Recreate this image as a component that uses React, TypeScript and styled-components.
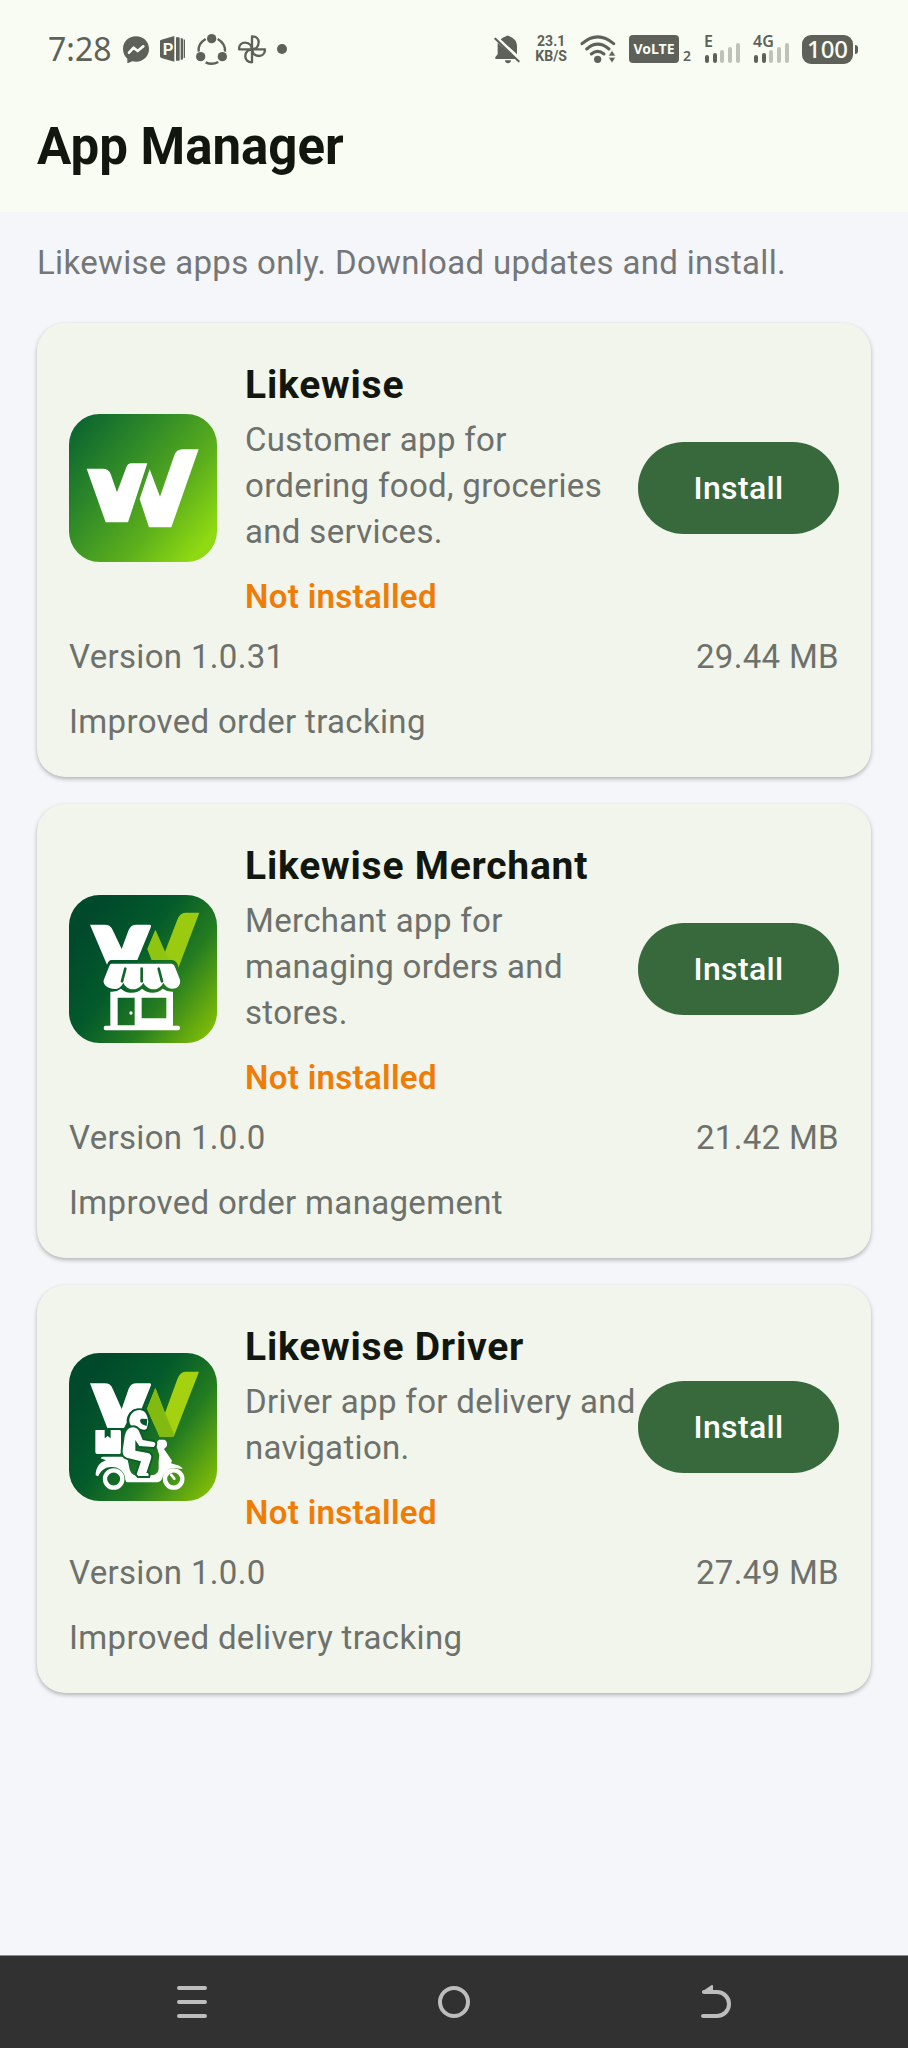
import React from "react";
import styled, { createGlobalStyle } from "styled-components";

const INK = "#5e6159";

const GlobalStyle = createGlobalStyle`
  * { box-sizing: border-box; }
  body {
    margin: 0;
    background: #f4f6f9;
    font-family: Roboto, "Liberation Sans", sans-serif;
    font-size: 33px;
    line-height: 46px;
    letter-spacing: 0.01em;
    color: #6e716b;
  }
  h1, h2, p, ul { margin: 0; padding: 0; }
  svg { display: block; flex: none; }
`;

const Screen = styled.div`
  display: flex;
  flex-direction: column;
  min-height: 100vh;
`;

const TopArea = styled.header`
  background: #f9fcf2;
`;

const StatusBar = styled.div`
  display: flex;
  align-items: center;
  justify-content: space-between;
  height: 98px;
  padding: 0 50px 0 48px;
  color: ${INK};
  font-family: "Noto Sans", sans-serif;
  letter-spacing: 0;
`;

const StatusGroup = styled.div<{ $gap: number }>`
  display: flex;
  align-items: center;
  gap: ${(p) => p.$gap}px;
`;

const Clock = styled.time`
  font-size: 32px;
  line-height: 40px;
`;

const Dot = styled.span`
  width: 10px;
  height: 10px;
  border-radius: 50%;
  background: ${INK};
`;

const Speed = styled.div`
  margin-left: 2px;
  font-family: Roboto, sans-serif;
  font-size: 14px;
  line-height: 15px;
  font-weight: 700;
  text-align: center;
`;

const VolteGroup = styled.div`
  display: flex;
  align-items: flex-end;
  gap: 4px;
`;

const VolteBadge = styled.span`
  width: 50px;
  height: 28px;
  border-radius: 4px;
  background: ${INK};
  color: #f9fcf2;
  font-size: 14px;
  line-height: 28px;
  font-weight: 700;
  text-align: center;
`;

const SimNumber = styled.span`
  font-size: 14px;
  line-height: 14px;
  font-weight: 600;
`;

const SignalBox = styled.div`
  position: relative;
`;

const SignalLabel = styled.span`
  position: absolute;
  left: 0;
  top: -2px;
  font-size: 16px;
  line-height: 16px;
  font-weight: 600;
`;

const Battery = styled.div`
  display: flex;
  align-items: center;
  gap: 2px;
`;

const BatteryBody = styled.span`
  width: 51px;
  height: 29px;
  border-radius: 9px;
  background: ${INK};
  color: #f9fcf2;
  font-size: 24px;
  line-height: 28px;
  font-weight: 500;
  text-align: center;
`;

const BatteryTip = styled.span`
  width: 3px;
  height: 9px;
  border-radius: 0 3px 3px 0;
  background: ${INK};
`;

const PageTitle = styled.h1`
  padding: 21px 37px 37px;
  font-size: 51px;
  line-height: 56px;
  font-weight: 700;
  letter-spacing: 0;
  color: #11170f;
`;

const Content = styled.main`
  flex: 1;
  padding: 28px 37px;
`;

const Intro = styled.p`
  margin-bottom: 37px;
  color: #757678;
`;

const CardList = styled.ul`
  display: flex;
  flex-direction: column;
  gap: 27px;
  list-style: none;
`;

const Card = styled.li`
  padding: 32px;
  border-radius: 28px;
  background: #f1f5eb;
  box-shadow: 0 2px 4px rgba(0, 0, 0, 0.28);
`;

const CardMain = styled.div`
  display: flex;
  align-items: center;
`;

const Info = styled.div`
  flex: 1;
  min-width: 0;
  margin-left: 28px;
`;

const AppName = styled.h2`
  margin-bottom: 2px;
  font-size: 39px;
  line-height: 60px;
  font-weight: 700;
  letter-spacing: 0.02em;
  color: #11170f;
`;

const Status = styled.p`
  margin-top: 19px;
  color: #f07c08;
  font-weight: 600;
`;

const InstallButton = styled.button`
  flex: none;
  width: 201px;
  height: 92px;
  border: 0;
  border-radius: 46px;
  background: #38693c;
  color: #fff;
  font: inherit;
  font-size: 32px;
  font-weight: 500;
  letter-spacing: inherit;
`;

const Meta = styled.div`
  display: flex;
  justify-content: space-between;
  margin: 14px 0 19px;
`;

const NavBar = styled.nav`
  display: grid;
  grid-template-columns: repeat(3, 1fr);
  height: 93px;
  padding: 0 61px;
  border-top: 1px solid #8b8f8c;
  background: #303130;
`;

const NavButton = styled.button`
  display: flex;
  align-items: center;
  justify-content: center;
  border: 0;
  background: none;
  color: #bdbdbd;
`;

const MessengerIcon = () => (
  <svg width="26" height="27" viewBox="281 44 78 81" aria-hidden="true">
    <path fill={INK} d="M320 45c-22 0-39 16-39 38 0 12 5 22 13 29v12c0 1 2 2 3 1l12-5c4 1 7 1 11 1 22 0 39-16 39-38s-17-38-39-38z" />
    <path fill="none" stroke="#f9fcf2" strokeWidth="8" strokeLinejoin="round" strokeLinecap="round" d="M299 94l14-15 12 10 17-14" />
  </svg>
);

const PublisherIcon = () => (
  <svg width="25" height="26" viewBox="398 46 75 78" aria-hidden="true">
    <path fill={INK} d="M402 57l39-11v77l-39-11q-4-1-4-5V62q0-4 4-5zM446 50h8q3 0 3 3v64q0 3-3 3h-8zM460 53h4q3 0 3 3v58q0 3-3 3h-4zM469 56q4 0 4 3v50q0 4-4 4z" />
    <text x="406" y="104" fill="#f9fcf2" fontFamily="Roboto, sans-serif" fontSize="50" fontWeight="700">P</text>
  </svg>
);

const ShareIcon = () => (
  <svg width="31" height="31" viewBox="505 38 93 93" aria-hidden="true">
    <g fill={INK}>
      <circle cx="552" cy="52" r="14" />
      <circle cx="519" cy="106" r="14" />
      <circle cx="584" cy="106" r="14" />
    </g>
    <g fill="none" stroke={INK} strokeWidth="7">
      <path d="M534 53q-24 14-21 38" />
      <path d="M570 53q24 14 22 38" />
      <path d="M534 123q18 9 38-1" />
    </g>
  </svg>
);

const PinwheelIcon = () => (
  <svg width="28" height="29" viewBox="627 41 84 87" aria-hidden="true">
    <g fill="none" stroke={INK} strokeWidth="7" strokeLinejoin="round">
      {[0, 90, 180, 270].map((a) => (
        <path key={a} transform={`rotate(${a} 669 84)`} d="M669 84V45c13 0 20 8 20 18 0 8-3 13-7 17z" />
      ))}
    </g>
  </svg>
);

const BellOffIcon = () => (
  <svg width="26" height="29" viewBox="41 43 78 87" aria-hidden="true">
    <path fill={INK} d="M61 56c4-4 9-7 14-8 2-4 12-4 14 0 13 4 21 15 21 28v25zM52 66l56 49H45v-6l7-8zM74 119h18c0 5-4 9-9 9s-9-4-9-9z" />
    <path stroke={INK} strokeWidth="6" strokeLinecap="round" d="M45 54l70 68" />
  </svg>
);

const WifiIcon = () => (
  <svg width="36" height="29" viewBox="295 41 108 87" aria-hidden="true">
    <g fill="none" stroke={INK} strokeWidth="9" strokeLinecap="round">
      <path d="M301 67q47-41 95 0" />
      <path d="M315 83q33-29 67 0" />
      <path d="M329 98q19-16 38 0" />
    </g>
    <circle cx="348" cy="114" r="11" fill={INK} />
    <path fill={INK} stroke="#f9fcf2" strokeWidth="2" d="M380 104l11-17 11 17zM380 108h22l-11 17z" />
  </svg>
);

const Signal = ({ label }: { label: string }) => (
  <SignalBox>
    <svg width="36" height="28" viewBox="0 0 36 28" aria-hidden="true">
      <rect x="1" y="20" width="4" height="8" rx="2" fill={INK} />
      <rect x="9" y="18" width="4" height="10" rx="2" fill={INK} />
      <rect x="16" y="15" width="4" height="13" rx="2" fill="#bfc2b9" />
      <rect x="24" y="12" width="4" height="16" rx="2" fill="#bfc2b9" />
      <rect x="32" y="8" width="4" height="20" rx="2" fill="#bfc2b9" />
    </svg>
    <SignalLabel>{label}</SignalLabel>
  </SignalBox>
);

const LikewiseLogo = () => (
  <svg width="148" height="148" viewBox="59 41 444 444" role="img" aria-label="Likewise">
    <defs>
      <linearGradient id="lw" x1="0.05" y1="0.05" x2="0.98" y2="0.8">
        <stop offset="0" stopColor="#0b6530" />
        <stop offset="0.35" stopColor="#2f8a28" />
        <stop offset="0.7" stopColor="#5caf1c" />
        <stop offset="1" stopColor="#8fda12" />
      </linearGradient>
    </defs>
    <rect x="59" y="41" width="444" height="444" rx="92" fill="url(#lw)" />
    <g fill="#fff">
      <path d="M112 205h48q18 0 24 16l19 55 28-75q4-12 15-12h48l-58 177h-67z" />
      <path d="M301 207l31 82 43-124q6-18 24-18h49l-82 234h-67l-28-85z" />
    </g>
  </svg>
);

const DarkTile = ({ id }: { id: string }) => (
  <>
    <defs>
      <linearGradient id={id} x1="0.1" y1="0.2" x2="1" y2="0.85">
        <stop offset="0" stopColor="#00492b" />
        <stop offset="0.35" stopColor="#035a2b" />
        <stop offset="0.65" stopColor="#247c20" />
        <stop offset="1" stopColor="#7dbb08" />
      </linearGradient>
    </defs>
    <rect x="59" y="43" width="444" height="444" rx="92" fill={`url(#${id})`} />
  </>
);

const MerchantLogo = () => (
  <svg width="148" height="148" viewBox="59 43 444 444" role="img" aria-label="Likewise Merchant">
    <DarkTile id="merchant" />
    <path fill="#fff" d="M122 132h44q18 0 24 16l27 57 21-57q7-16 23-16h40q6 0 4 6l-41 100h-78q-8 0-13 14z" />
    <path fill="#9bcb10" d="M318 147l29 66 37-96q8-21 24-21h42l-63 166q-3-24-20-24h-60l-13-33z" />
    <path fill="#83bd12" opacity=".5" d="M318 147l29 66 12 25h-52l-13-33z" />
    <path fill="#fff" d="M187 249h180q6 0 9 8l16 40c3 17-8 27-23 27-11 0-21-7-27-18-6 12-16 20-29 20s-25-8-31-20c-6 12-18 20-31 20s-24-8-29-20c-6 12-14 19-27 19-16 0-35-10-32-26l17-43q2-7 7-7z" />
    <g fill="none" stroke="#14672a" strokeWidth="8" strokeLinecap="round">
      <path d="M228 264l-10 38" />
      <path d="M277 264v38" />
      <path d="M328 264l10 38" />
    </g>
    <path fill="#fff" fillRule="evenodd" d="M183 333q18 2 32-9 15 14 32 12 20 0 31-12 14 12 31 12 19 0 31-12 14 10 31 9v102h15q6 0 6 7t-6 7H169q-6 0-6-7t6-7h14zM205 351v83h51v-83zM277 351v62h74v-62z" />
    <circle cx="245" cy="397" r="5" fill="#fff" />
  </svg>
);

const DriverLogo = () => (
  <svg width="148" height="148" viewBox="59 38 444 444" role="img" aria-label="Likewise Driver">
    <g transform="translate(0 -5)">
      <DarkTile id="driver" />
    </g>
    <path fill="#fff" d="M122 129h44q18 0 24 16l27 61 21-61q7-16 23-16h40q6 0 4 6l-29 72c-25-8-46 13-44 40l-8 16h-50z" />
    <path fill="#a4d110" d="M318 143l29 75 37-101q8-23 24-23h41l-76 195h-42l-38-84z" />
    <path fill="#83ba12" d="M318 143l29 75 28 66-2 5h-42l-38-84z" />
    <g fill="#fff">
      <path d="M139 269h27v25l9-7 9 7v-25h26q5 0 5 5v61q0 6-5 6h-66q-6 0-6-6v-61q0-5 1-5z" />
      <path fillRule="evenodd" stroke="#04572b" strokeWidth="10" paintOrder="stroke" d="M297 244l-4 19q-2 6-10 5l-28-7c-11-4-16-12-15-23 2-17 14-29 30-29 15 0 24 11 27 35z" />
      <path fill="#04572b" d="M294 236l-17-1c-9 2-4 15 7 19l8 3z" />
      <path d="M154 354q1-5 7-5h54q17 0 20 9l4 20q3 27 22 27h44c16 0 24-8 23-27-1-15 1-24 2-33l-6-20-6-15 11-12h15q11 3 9 19l-9 9 24 35-3 8 18 5q14 5 17 12l-18-2c-22-4-37 11-44 32-4 7-9 10-19 10h-83q-7 0-8-8c-1-25-21-39-42-38-21 0-34 14-39 28l-8-3c0-23 12-39 31-45z" />
      <path stroke="#0c612a" strokeWidth="12" paintOrder="stroke" d="M242 263c15-6 25 2 29 14l9 22 33 6q7 3 4 10l-4 5-43-3-12-18v32l37 7q14 4 10 17l-14 43h5q3 3 1 9h-30l-5-5 13-39-43-11c-11-4-12-12-12-22l5-34c2-17 7-29 17-33z" />
    </g>
    <g fill="none" stroke="#fff">
      <circle cx="193" cy="416" r="26" strokeWidth="13" />
      <circle cx="373" cy="416" r="26" strokeWidth="13" />
      <path d="M365 403l10 12" strokeWidth="8" strokeLinecap="round" />
    </g>
  </svg>
);

interface AppEntry {
  name: string;
  description: string;
  version: string;
  size: string;
  notes: string;
  Logo: React.ComponentType;
}

const apps: AppEntry[] = [
  {
    name: "Likewise",
    description: "Customer app for ordering\u00a0food, groceries and services.",
    version: "1.0.31",
    size: "29.44 MB",
    notes: "Improved order tracking",
    Logo: LikewiseLogo,
  },
  {
    name: "Likewise Merchant",
    description: "Merchant app for managing orders and stores.",
    version: "1.0.0",
    size: "21.42 MB",
    notes: "Improved order management",
    Logo: MerchantLogo,
  },
  {
    name: "Likewise Driver",
    description: "Driver app for delivery and navigation.",
    version: "1.0.0",
    size: "27.49 MB",
    notes: "Improved delivery tracking",
    Logo: DriverLogo,
  },
];

const AppCard = ({ name, description, version, size, notes, Logo }: AppEntry) => (
  <Card>
    <CardMain>
      <Logo />
      <Info>
        <AppName>{name}</AppName>
        <p>{description}</p>
        <Status>Not installed</Status>
      </Info>
      <InstallButton type="button">Install</InstallButton>
    </CardMain>
    <Meta>
      <span>Version {version}</span>
      <span>{size}</span>
    </Meta>
    <p>{notes}</p>
  </Card>
);

export default function App() {
  return (
    <Screen>
      <GlobalStyle />
      <TopArea>
        <StatusBar>
          <StatusGroup $gap={11}>
            <Clock>7:28</Clock>
            <MessengerIcon />
            <PublisherIcon />
            <ShareIcon />
            <PinwheelIcon />
            <Dot />
          </StatusGroup>
          <StatusGroup $gap={13}>
            <BellOffIcon />
            <Speed>
              23.1
              <br />
              KB/S
            </Speed>
            <WifiIcon />
            <VolteGroup>
              <VolteBadge>VoLTE</VolteBadge>
              <SimNumber>2</SimNumber>
            </VolteGroup>
            <Signal label="E" />
            <Signal label="4G" />
            <Battery>
              <BatteryBody>100</BatteryBody>
              <BatteryTip />
            </Battery>
          </StatusGroup>
        </StatusBar>
        <PageTitle>App Manager</PageTitle>
      </TopArea>
      <Content>
        <Intro>Likewise apps only. Download updates and install.</Intro>
        <CardList>
          {apps.map((app) => (
            <AppCard key={app.name} {...app} />
          ))}
        </CardList>
      </Content>
      <NavBar aria-label="System navigation">
        <NavButton type="button" aria-label="Recent apps">
          <svg width="30" height="34" viewBox="0 0 30 34" fill="none" stroke="currentColor" strokeWidth="4" strokeLinecap="round">
            <path d="M2 3h26M2 17h26M2 31h26" />
          </svg>
        </NavButton>
        <NavButton type="button" aria-label="Home">
          <svg width="34" height="34" viewBox="0 0 34 34" fill="none" stroke="currentColor" strokeWidth="4">
            <circle cx="17" cy="17" r="14" />
          </svg>
        </NavButton>
        <NavButton type="button" aria-label="Back">
          <svg width="30" height="34" viewBox="0 0 30 34" fill="none" stroke="currentColor" strokeWidth="4" strokeLinecap="round" strokeLinejoin="round">
            <path d="M2 31h14a12 12 0 0 0 0-24H3" />
            <path fill="currentColor" strokeWidth="2" d="M11 1v6H2z" />
          </svg>
        </NavButton>
      </NavBar>
    </Screen>
  );
}
